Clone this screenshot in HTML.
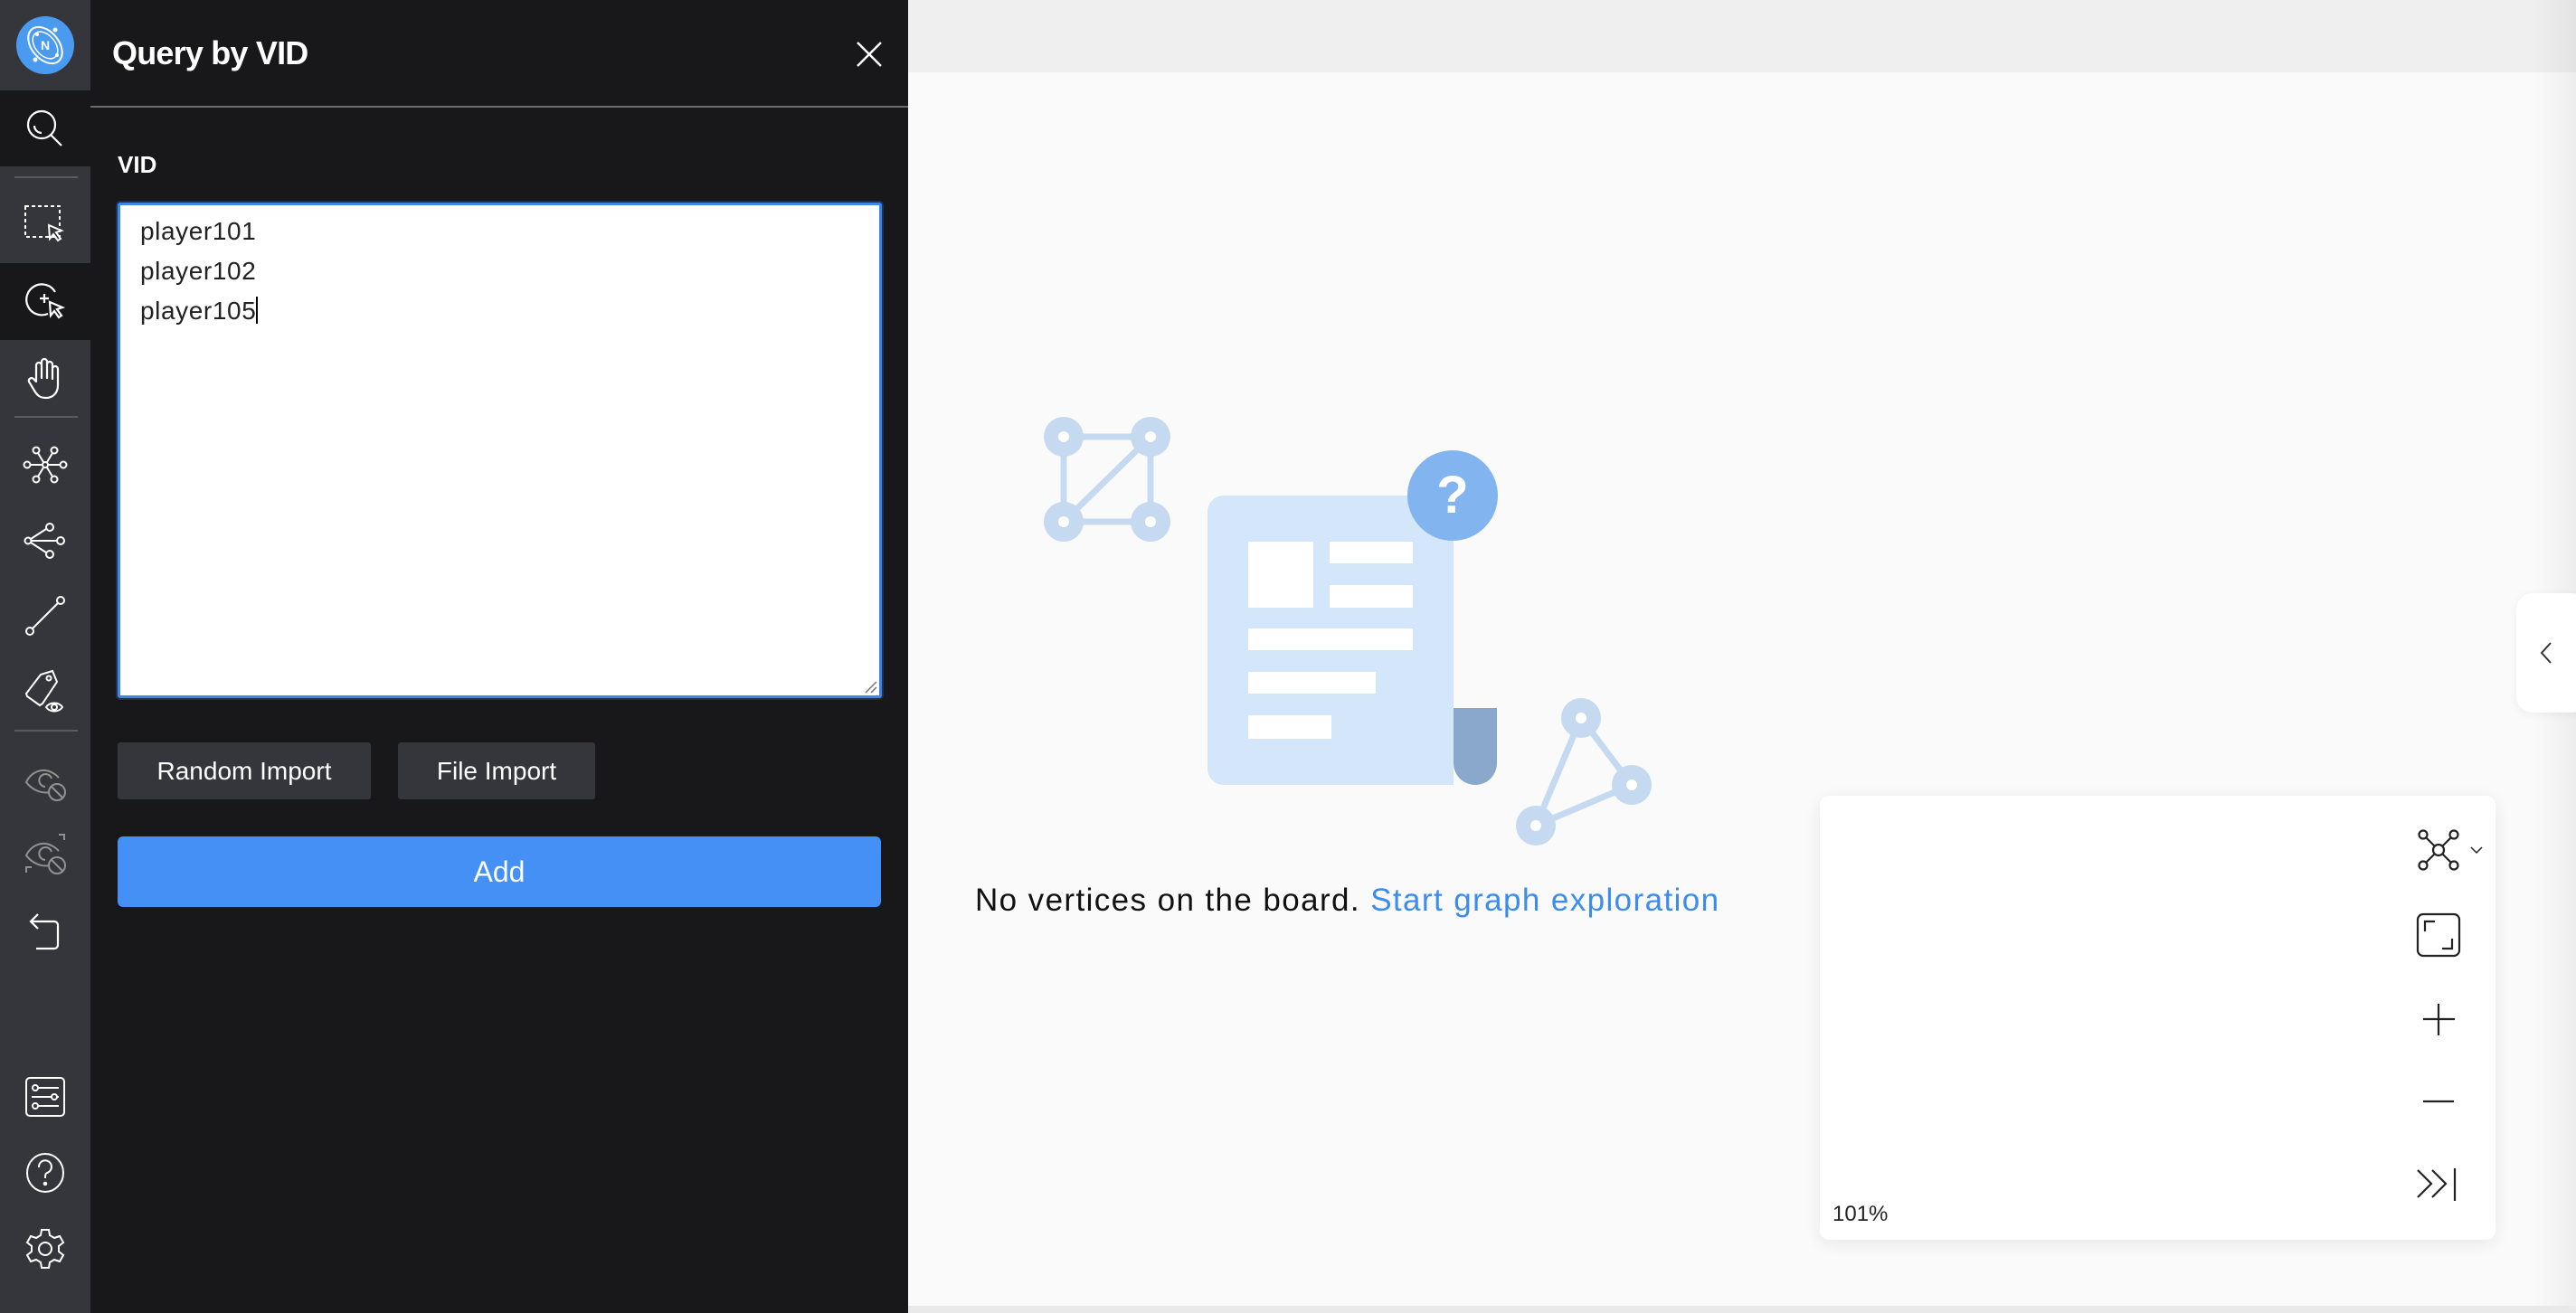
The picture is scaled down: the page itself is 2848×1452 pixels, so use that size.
<!DOCTYPE html>
<html><head><meta charset="utf-8"><style>
*{margin:0;padding:0;box-sizing:border-box}
html,body{width:2848px;height:1452px;overflow:hidden;background:#fafafa;font-family:"Liberation Sans",Arial,sans-serif}
.abs{position:absolute}
#side{left:0;top:0;width:100px;height:1452px;background:#35363b}
#panel{left:100px;top:0;width:904px;height:1452px;background:#18181a}
.sep{position:absolute;left:16px;width:70px;height:2px;background:#5a5b60}
.act{position:absolute;left:0;width:100px;background:#18181a}
.ic{position:absolute;left:25px;width:50px;height:50px}
.btn{position:absolute;background:#35363b;color:#fff;font-size:28px;display:flex;align-items:center;justify-content:center;border-radius:3px}
</style></head><body>
<div id="side" class="abs">
  <div class="act" style="top:100px;height:84px"></div>
  <div class="act" style="top:291px;height:85px"></div>
  <div class="sep" style="top:195px"></div>
  <div class="sep" style="top:460px"></div>
  <div class="sep" style="top:807px"></div>
  <svg class="abs" style="left:18px;top:18px" width="64" height="64" viewBox="0 0 64 64">
    <circle cx="32" cy="32" r="32" fill="#4a9bf0"/>
    <ellipse cx="32" cy="32" rx="15" ry="23" transform="rotate(-40 32 32)" fill="none" stroke="#fff" stroke-width="2"/>
    <ellipse cx="32" cy="32" rx="11" ry="17" transform="rotate(-40 32 32)" fill="none" stroke="#fff" stroke-width="1.5"/>
    <circle cx="43" cy="15" r="2.5" fill="#fff"/><circle cx="21" cy="48" r="2.5" fill="#fff"/><circle cx="23" cy="20" r="2" fill="#fff"/><circle cx="45" cy="43" r="2" fill="#fff"/>
    <text x="32" y="37" font-size="14" font-weight="bold" fill="#fff" text-anchor="middle" font-family="Liberation Sans">N</text>
  </svg>
  <svg class="ic" style="top:117px" viewBox="0 0 50 50" fill="none" stroke="#fff" stroke-width="2.2"><circle cx="21" cy="21" r="15"/><path d="M31 32l12 12M13 22a8 8 0 0 0 8 8"/></svg>
  <svg class="ic" style="top:222px" viewBox="0 0 50 50" fill="none" stroke="#fff" stroke-width="2"><rect x="3" y="6" width="38" height="34" stroke-dasharray="4 3"/><path d="M29 27l14 6-6 2 5 7-3 2-5-7-4 5z" fill="#35363b"/></svg>
  <svg class="ic" style="top:309px" viewBox="0 0 50 50" fill="none" stroke="#fff" stroke-width="2.2"><path d="M36 14a17 17 0 1 0-8 24"/><path d="M19 21h10M24 16v10"/><path d="M30 25l14 6-6 2 5 7-3 2-5-7-4 5z" fill="#18181a"/></svg>
  <svg class="ic" style="top:394px" viewBox="0 0 50 50" fill="none" stroke="#fff" stroke-width="2.2" stroke-linejoin="round"><path d="M15 28V10a3 3 0 0 1 6 0v14V6a3 3 0 0 1 6 0v18V9a3 3 0 0 1 6 0v16V14a3 3 0 0 1 6 0v18c0 9-6 14-13 14s-10-3-13-8l-6-10a3 3 0 0 1 5-3z"/></svg>
  <svg class="ic" style="top:489px" viewBox="0 0 50 50" fill="none" stroke="#fff" stroke-width="2"><circle cx="25" cy="25" r="3"/><circle cx="15" cy="9" r="3.5"/><circle cx="35" cy="9" r="3.5"/><circle cx="15" cy="41" r="3.5"/><circle cx="35" cy="41" r="3.5"/><circle cx="5" cy="25" r="3.5"/><circle cx="45" cy="25" r="3.5"/><path d="M8.5 25h13M28 25h13.5M17 12l6 10M33 12l-6 10M17 38l6-10M33 38l-6-10"/></svg>
  <svg class="ic" style="top:573px" viewBox="0 0 50 50" fill="none" stroke="#fff" stroke-width="2"><circle cx="6" cy="25" r="3.5"/><circle cx="30" cy="10" r="4"/><circle cx="42" cy="25" r="4"/><circle cx="30" cy="40" r="4"/><path d="M9 23l17-11M9.5 25H38M9 27l17 11"/></svg>
  <svg class="ic" style="top:656px" viewBox="0 0 50 50" fill="none" stroke="#fff" stroke-width="2"><circle cx="8" cy="42" r="4"/><circle cx="42" cy="8" r="4"/><path d="M11 39L39 11"/></svg>
  <svg class="ic" style="top:740px" viewBox="0 0 50 50" fill="none" stroke="#fff" stroke-width="2"><path d="M20 6l13-4 5 12-16 24-3 2L5 30l-1-3z"/><circle cx="29" cy="10" r="2.5"/><path d="M26 42c4-6 14-6 18 0-4 6-14 6-18 0z"/><circle cx="35" cy="42" r="3"/></svg>
  <svg class="ic" style="top:838px;opacity:.45" viewBox="0 0 50 50" fill="none" stroke="#fff" stroke-width="2"><path d="M30 38c-10 2-20-3-26-11C10 14 26 8 40 22"/><path d="M25 32a7 7 0 1 1 7-9"/><circle cx="38" cy="38" r="9"/><path d="M32 32l12 12"/></svg>
  <svg class="ic" style="top:919px;opacity:.45" viewBox="0 0 50 50" fill="none" stroke="#fff" stroke-width="2"><path d="M30 38c-10 2-20-3-26-11C10 14 26 8 40 22"/><path d="M25 32a7 7 0 1 1 7-9"/><circle cx="38" cy="38" r="9"/><path d="M32 32l12 12M40 4h6v6M4 46v-6h6"/></svg>
  <svg class="ic" style="top:1005px" viewBox="0 0 50 50" fill="none" stroke="#fff" stroke-width="2.2"><path d="M17 6l-8 8 8 8M9 14h26a4 4 0 0 1 4 4v22a4 4 0 0 1-4 4H15"/></svg>
  <svg class="ic" style="top:1188px" viewBox="0 0 50 50" fill="none" stroke="#fff" stroke-width="2"><rect x="4" y="4" width="42" height="42" rx="4"/><circle cx="14" cy="15" r="3"/><circle cx="35" cy="25" r="3"/><circle cx="14" cy="35" r="3"/><path d="M17 15h23M10 25h22M38 25h2M17 35h23"/></svg>
  <svg class="ic" style="top:1272px" viewBox="0 0 50 50" fill="none" stroke="#fff" stroke-width="2"><ellipse cx="25" cy="25" rx="20" ry="21"/><path d="M18 19a7 7 0 1 1 9 6c-2 1-2 3-2 6"/><circle cx="25" cy="37" r="1.3" fill="#fff"/></svg>
  <svg class="ic" style="top:1356px" viewBox="0 0 50 50" fill="none" stroke="#fff" stroke-width="2"><path d="M21 4h8l1 6 5 3 6-2 4 7-5 4v6l5 4-4 7-6-2-5 3-1 6h-8l-1-6-5-3-6 2-4-7 5-4v-6l-5-4 4-7 6 2 5-3z"/><circle cx="25" cy="25" r="7"/></svg>
</div>
<div id="panel" class="abs">
  <div class="abs" style="left:24px;top:38px;font-size:36px;font-weight:bold;color:#fff;letter-spacing:-0.8px">Query by VID</div>
  <svg class="abs" style="left:846px;top:45px" width="30" height="30" viewBox="0 0 30 30" stroke="#fff" stroke-width="2.5"><path d="M2 2l26 26M28 2L2 28"/></svg>
  <div class="abs" style="left:0;top:117px;width:904px;height:2px;background:#6b6b6e"></div>
  <div class="abs" style="left:30px;top:167px;font-size:26px;font-weight:bold;color:#fff">VID</div>
  <div class="abs" style="left:30px;top:224px;width:845px;height:548px;background:#fff;border:3px solid #3e87e8;border-radius:3px;box-shadow:0 0 0 2px #1d3350">
    <div style="position:absolute;left:22px;top:7px;font-size:28px;line-height:44px;color:#222;letter-spacing:0.6px">player101<br>player102<br>player105<span style="display:inline-block;width:2px;height:30px;background:#000;vertical-align:-5px"></span></div>
    <svg style="position:absolute;right:2px;bottom:2px" width="16" height="16" stroke="#777" stroke-width="1.5"><path d="M3 15L15 3M9 15l6-6"/></svg>
  </div>
  <div class="btn" style="left:30px;top:821px;width:280px;height:63px">Random Import</div>
  <div class="btn" style="left:340px;top:821px;width:218px;height:63px">File Import</div>
  <div class="btn" style="left:30px;top:925px;width:844px;height:78px;background:#4590f5;border-radius:6px;font-size:32px">Add</div>
</div>
<div class="abs" style="left:1004px;top:0;width:1844px;height:80px;background:#efefef"></div>
<div class="abs" style="left:2800px;top:0;width:48px;height:1452px;background:linear-gradient(90deg,rgba(0,0,0,0),rgba(0,0,0,.05))"></div>
<svg class="abs" style="left:1100px;top:440px" width="760" height="500" viewBox="1100 440 760 500">
  <g stroke="#c5daf0" stroke-width="7" fill="none"><path d="M1176 483H1272V577H1176ZM1272 483L1176 577"/><path d="M1748 794L1804 868L1698 913Z"/></g>
  <g fill="#c5daf0"><circle cx="1176" cy="483" r="22"/><circle cx="1272" cy="483" r="22"/><circle cx="1176" cy="577" r="22"/><circle cx="1272" cy="577" r="22"/><circle cx="1748" cy="794" r="22"/><circle cx="1804" cy="868" r="22"/><circle cx="1698" cy="913" r="22"/></g>
  <g fill="#fff"><circle cx="1176" cy="483" r="6"/><circle cx="1272" cy="483" r="6"/><circle cx="1176" cy="577" r="6"/><circle cx="1272" cy="577" r="6"/><circle cx="1748" cy="794" r="6"/><circle cx="1804" cy="868" r="6"/><circle cx="1698" cy="913" r="6"/></g>
  <path d="M1353 548H1607V868H1353a18 18 0 0 1-18-18V566a18 18 0 0 1 18-18z" fill="#d4e6fa"/>
  <path d="M1607 783H1655V844a24 24 0 0 1-48 0z" fill="#8aa8cb"/>
  <g fill="#fff"><rect x="1380" y="599" width="72" height="73"/><rect x="1470" y="599" width="92" height="24"/><rect x="1470" y="647" width="92" height="25"/><rect x="1380" y="695" width="182" height="24"/><rect x="1380" y="743" width="141" height="24"/><rect x="1380" y="791" width="92" height="26"/></g>
  <circle cx="1606" cy="548" r="50" fill="#82b4ef"/>
  <text x="1606" y="567" font-size="58" font-weight="bold" fill="#fff" text-anchor="middle" font-family="Liberation Sans">?</text>
</svg>
<div class="abs" style="left:1078px;top:976px;font-size:35px;color:#111;white-space:nowrap;letter-spacing:1.4px">No vertices on the board. <span style="color:#3c8cf0">Start graph exploration</span></div>
<div class="abs" style="left:2782px;top:656px;width:80px;height:132px;background:#fff;border-radius:18px;box-shadow:0 2px 10px rgba(0,0,0,.06)"></div>
<svg class="abs" style="left:2806px;top:708px" width="18" height="28" stroke="#333" stroke-width="2" fill="none"><path d="M14 3L4 14l10 11"/></svg>
<div class="abs" style="left:2012px;top:880px;width:747px;height:491px;background:#fff;border-radius:10px;box-shadow:0 4px 18px rgba(0,0,0,.08)">
  <div class="abs" style="left:14px;top:449px;font-size:24px;color:#222">101%</div>
</div>
<svg class="abs" style="left:2660px;top:900px" width="100" height="440" viewBox="2660 900 100 440" fill="none" stroke="#222" stroke-width="2.2">
  <circle cx="2696" cy="940" r="6"/><circle cx="2679" cy="923" r="4.5"/><circle cx="2713" cy="923" r="4.5"/><circle cx="2679" cy="957" r="4.5"/><circle cx="2713" cy="957" r="4.5"/>
  <path d="M2682 926l10 10M2710 926l-10 10M2682 954l10-10M2710 954l-10-10"/>
  <path d="M2732 937l6 6 6-6" stroke-width="1.5"/>
  <rect x="2673" y="1011" width="46" height="46" rx="6"/><path d="M2681 1030v-11h11M2711 1038v11h-11"/>
  <path d="M2696 1110v35M2679 1127h35"/>
  <path d="M2679 1218h34"/>
  <path d="M2673 1294l15 15-15 15M2689 1294l15 15-15 15M2714 1292v36"/>
</svg>
<div class="abs" style="left:1004px;top:1444px;width:1844px;height:8px;background:#e9e9e9"></div>
</body></html>
